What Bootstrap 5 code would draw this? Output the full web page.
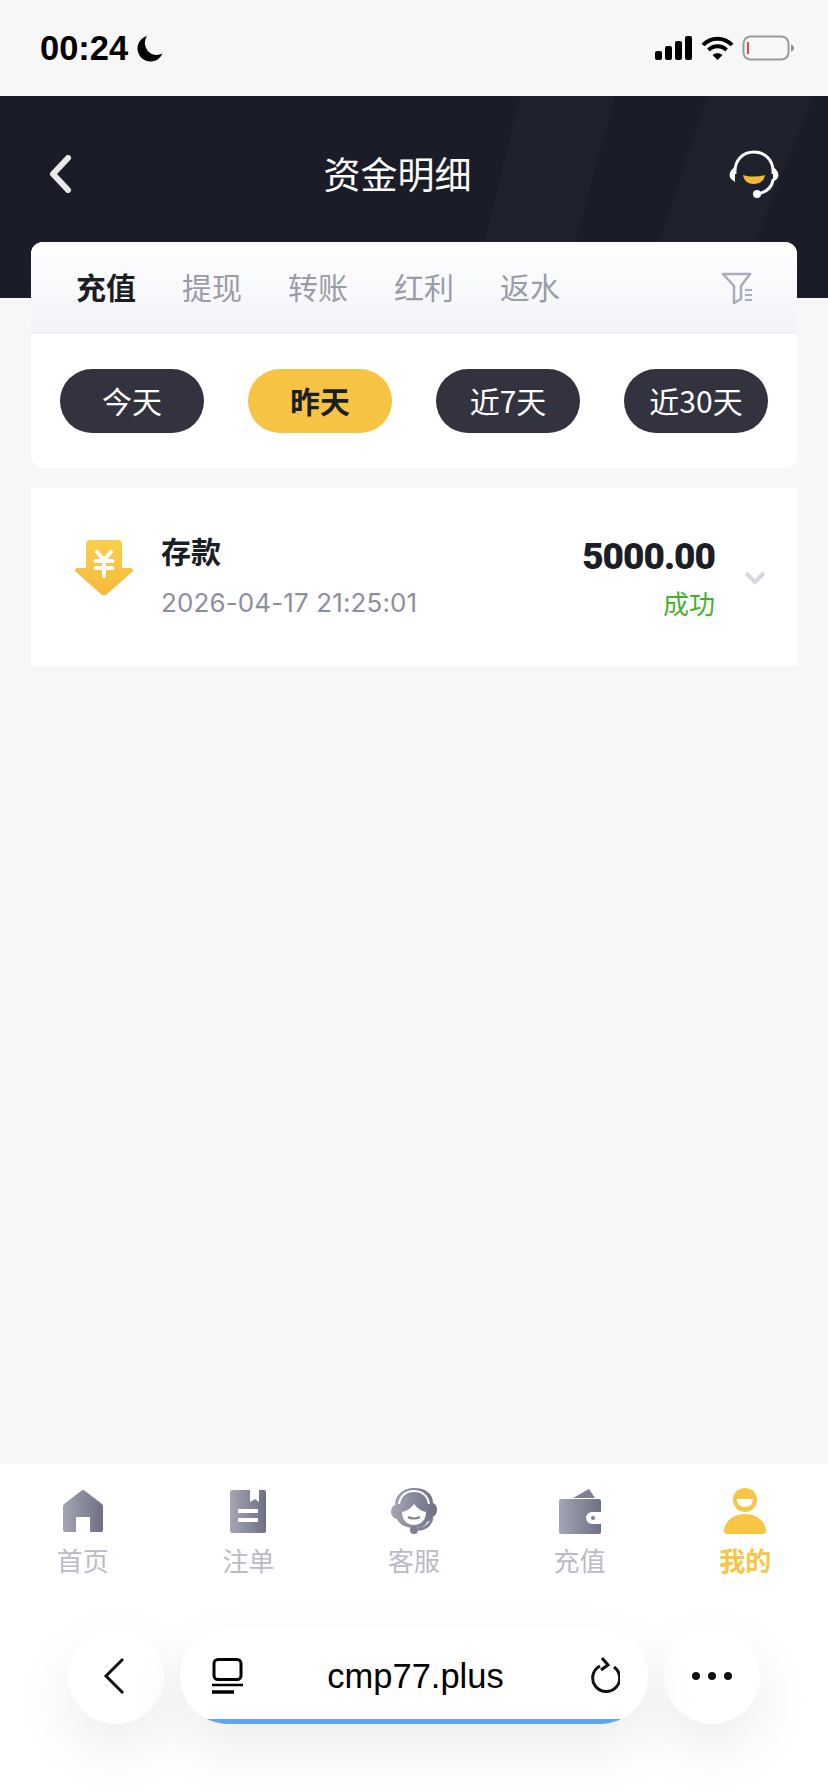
<!DOCTYPE html>
<html lang="zh-CN">
<head>
  <meta charset="UTF-8">
  <meta name="viewport" content="width=device-width, initial-scale=1.0">
  <title>资金明细</title>
  <link href="https://cdn.jsdelivr.net/npm/bootstrap@5.3.0/dist/css/bootstrap.min.css" rel="stylesheet">
  <style>
    body {
      background: #f7f7f7;
      font-family: "Noto Sans CJK SC", "Liberation Sans", sans-serif;
      width: 828px;
      height: 1792px;
      overflow: hidden;
    }
    .page-wrap { height: 1792px; }
    .status-row { height: 96px; padding: 0 34px 0 40px; }
    .status-time { font: 700 34.5px/1 "Liberation Sans", sans-serif; color: #000; margin-right: 9px; }
    .top-head { height: 202px; background: #1a1d27; overflow: hidden; }
    .head-bands { position: absolute; left: 0; top: 0; }
    .head-row { height: 156px; padding: 0 49px 0 48px; position: relative; }
    .head-title { font-size: 37px; font-weight: 400; color: #fff; line-height: 1; margin-right: 6px; padding-bottom: 2px; }
    .filter-card {
      margin: -56px 31px 0;
      background: #fff;
      border-radius: 12px;
      position: relative;
      overflow: hidden;
    }
    .type-tabs {
      height: 92px;
      padding: 0 44px 0 45px;
      gap: 46px;
      background: linear-gradient(180deg, #fff 0%, #f1f3f8 100%);
    }
    .type-tab { font-size: 30px; color: #9a9ca9; line-height: 1; padding-bottom: 4px; }
    .type-tab.is-on { color: #1c1e26; font-weight: 700; }
    .day-row { padding: 35px 29px 35px 29px; justify-content: space-between; }
    .day-pill {
      width: 144px;
      height: 64px;
      border-radius: 32px;
      background: #32333f;
      color: #fff;
      font-size: 30px;
      line-height: 1;
      padding-bottom: 2px;
    }
    .day-pill.is-on { background: #f7c343; color: #1c1e26; font-weight: 700; }
    .record-card {
      margin: 20px 31px 0;
      height: 178px;
      background: #fff;
      padding: 0 31px 0 44px;
    }
    .record-icon { width: 58px; margin-right: 28px; margin-top: -18px; }
    .record-name { font-size: 30px; font-weight: 700; color: #1c1e26; line-height: 1; margin-bottom: 25px; margin-top: -4px; }
    .record-date { font: 400 26px/1 Inter, sans-serif; color: #8d8f9c; letter-spacing: .12px; }
    .record-amount { font: 900 37px/1 Roboto, sans-serif; letter-spacing: -1px; color: #1c1e26; margin-bottom: 15px; }
    .record-state { font-size: 26px; color: #46b02e; line-height: 1; }
    .record-arrow { margin-left: 29px; margin-top: 2px; }
    .bottom-area { background: #fff; height: 328px; }
    .tab-item { width: 20%; padding-top: 24px; }
    .tab-icon { height: 46px; }
    .tab-text { font-size: 26px; line-height: 1; margin-top: 13px; color: #b9bbc7; }
    .tab-item.is-on .tab-text { color: #f7c644; font-weight: 700; }
    .browser-bar { margin-top: 55px; padding: 0 68px; gap: 16px; }
    .round-btn {
      width: 96px;
      height: 96px;
      border-radius: 48px;
      background: #fff;
      box-shadow: 0 24px 60px rgba(0, 0, 0, .08);
    }
    .back-mark { margin-right: 5px; }
    .url-box {
      width: 468px;
      height: 96px;
      border-radius: 48px;
      background: #fff;
      box-shadow: 0 24px 60px rgba(0, 0, 0, .08);
      padding: 0 28px 0 32px;
      position: relative;
      overflow: hidden;
    }
    .url-text { font: 400 34.5px/1 "Liberation Sans", sans-serif; color: #000; margin-left: -3px; }
    .load-line { position: absolute; left: 0; right: 0; bottom: 0; height: 5px; background: #5fa5f7; }
  </style>
</head>
<body>
  <div class="page-wrap d-flex flex-column">
    <!-- Status bar -->
    <div class="status-row d-flex align-items-center">
      <span class="status-time">00:24</span>
      <svg width="26" height="27" viewBox="0 0 26 27"><path d="M10 1a13 13 0 1 0 15.500 17.500A12 12 0 0 1 10 1z" fill="#000"/></svg>
      <div class="ms-auto d-flex align-items-center">
        <svg width="38" height="24" viewBox="0 0 38 24" fill="#000"><rect x="0" y="15" width="7" height="9" rx="2"/><rect x="10" y="10" width="7" height="14" rx="2"/><rect x="20" y="5" width="7" height="19" rx="2"/><rect x="30" y="0" width="7" height="24" rx="2"/></svg>
        <svg class="ms-2" width="33" height="25" viewBox="0 0 33 25" fill="none" stroke="#000" stroke-width="4"><path d="M2 9c8-8.500 21-8.500 29 0"/><path d="M7.500 14c5-5 13-5 18 0"/><path d="M16.500 24l-5-5c3-2.500 7-2.500 10 0z" fill="#000" stroke="none"/></svg>
        <svg class="ms-2" width="52" height="26" viewBox="0 0 52 26"><rect x="1.500" y="1.500" width="45" height="23" rx="7" fill="none" stroke="#9a9a9a" stroke-width="2"/><rect x="5" y="7" width="2" height="12" fill="#e8434a"/><path d="M49 9.500c2 .5 3 2 3 3.500s-1 3-3 3.500z" fill="#8f8f8f"/></svg>
      </div>
    </div>

    <!-- Dark header -->
    <div class="top-head position-relative">
      <svg class="head-bands" width="828" height="202" viewBox="0 0 828 202">
        <polygon points="520,0 615,0 560,202 471,202" fill="#1f222c"/>
        <polygon points="707,0 813,0 733,202 642,202" fill="#1f222c"/>
      </svg>
      <div class="head-row d-flex align-items-center justify-content-between">
        <svg width="24" height="38" viewBox="0 0 24 38" fill="none"><path d="M20 3L5 19l15 16" stroke="#e9e9e9" stroke-width="6" stroke-linecap="round" stroke-linejoin="round"/></svg>
        <span class="head-title">资金明细</span>
        <svg width="50" height="48" viewBox="0 0 50 48" fill="none"><path d="M6 24C5 10 14 2 25 2s20 8 19 22" stroke="#fff" stroke-width="3"/><path d="M6 17c-5 3-7 8-4 12l4 3zM44 17c5 3 7 8 4 12l-4 3z" fill="#fff"/><path d="M44 30c-1 8-7 12-15 14" stroke="#fff" stroke-width="3" stroke-linecap="round"/><circle cx="28" cy="44" r="4" fill="#fff"/><path d="M14 25c7 2 15 2 22 0-1 6-5 9-11 9s-10-3-11-9z" fill="#f4b933"/></svg>
      </div>
    </div>

    <!-- Filters -->
    <div class="filter-card">
      <div class="type-tabs d-flex align-items-center">
        <span class="type-tab is-on">充值</span>
        <span class="type-tab">提现</span>
        <span class="type-tab">转账</span>
        <span class="type-tab">红利</span>
        <span class="type-tab">返水</span>
        <svg class="ms-auto" width="32" height="32" viewBox="0 0 32 32" fill="none" stroke="#a9acbb" stroke-width="2.500"><path d="M2 2h27l-9 12v13l-7 4V14z" stroke-linejoin="round"/><path d="M24 18h7M24 23h7M24 28h7" stroke-width="2"/></svg>
      </div>
      <div class="day-row d-flex">
        <div class="day-pill d-flex align-items-center justify-content-center">今天</div>
        <div class="day-pill is-on d-flex align-items-center justify-content-center">昨天</div>
        <div class="day-pill d-flex align-items-center justify-content-center">近7天</div>
        <div class="day-pill d-flex align-items-center justify-content-center">近30天</div>
      </div>
    </div>

    <!-- Record -->
    <div class="record-card d-flex align-items-center">
      <svg class="record-icon" width="58" height="56" viewBox="0 0 58 56">
        <defs>
          <linearGradient id="arrowFill" x1="0" y1="0" x2="0" y2="1"><stop offset="0" stop-color="#f9cf4c"/><stop offset="1" stop-color="#f5b93a"/></linearGradient>
          <linearGradient id="tabFill" x1="0" y1="0" x2="1" y2="0"><stop offset="0" stop-color="#a4a6b4"/><stop offset="1" stop-color="#6d6f84"/></linearGradient>
        </defs>
        <path d="M11 4a4 4 0 0 1 4-4h28a4 4 0 0 1 4 4v24h8c3 0 4 2 2 4L32 54a4 4 0 0 1-6 0L1 32c-2-2-1-4 2-4h8z" fill="url(#arrowFill)"/>
        <path d="M22 12l7 8 7-8M20.500 21h17M20.500 28h17M29 20v16" fill="none" stroke="#fff" stroke-width="4" stroke-linecap="round" stroke-linejoin="round"/>
      </svg>
      <div>
        <div class="record-name">存款</div>
        <div class="record-date">2026-04-17 21:25:01</div>
      </div>
      <div class="ms-auto text-end">
        <div class="record-amount">5000.00</div>
        <div class="record-state">成功</div>
      </div>
      <svg class="record-arrow" width="22" height="14" viewBox="0 0 22 14" fill="none"><path d="M2 2l9 9 9-9" stroke="#d6d7e0" stroke-width="4"/></svg>
    </div>

    <!-- Bottom -->
    <div class="bottom-area mt-auto">
      <div class="d-flex">
        <div class="tab-item d-flex flex-column align-items-center">
          <svg class="tab-icon" width="42" height="46" viewBox="0 0 42 46"><path d="M1 18a3 3 0 0 1 1-2L19 3a3 3 0 0 1 4 0l17 13a3 3 0 0 1 1 2v24a2 2 0 0 1-2 2H28V29H14v15H3a2 2 0 0 1-2-2z" fill="url(#tabFill)"/></svg>
          <span class="tab-text">首页</span>
        </div>
        <div class="tab-item d-flex flex-column align-items-center">
          <svg class="tab-icon" width="36" height="46" viewBox="0 0 36 46"><path d="M2 2h18v12l5-3 4 3V2h5a2 2 0 0 1 2 2v39a2 2 0 0 1-2 2H2a2 2 0 0 1-2-2V4a2 2 0 0 1 2-2z" fill="url(#tabFill)"/><path d="M8 23h20M8 32h20" stroke="#fff" stroke-width="4"/></svg>
          <span class="tab-text">注单</span>
        </div>
        <div class="tab-item d-flex flex-column align-items-center">
          <svg class="tab-icon" width="46" height="46" viewBox="0 0 46 46"><path d="M23 0C11 0 4 8 4 17 1 18 0 21 0 24s2 6 6 7c3 6 9 9 17 9 5 0 9-1 12-4l1-2c3-1 5-3 6-5 2-1 4-4 4-7s-1-6-4-7c0-9-7-15-19-15z" fill="url(#tabFill)"/><path d="M8 16C9 8 15 3 23 3s14 5 15 13" fill="none" stroke="#fff" stroke-width="2"/><path d="M11 24c5-1 9-4 12-8 3 4 7 7 12 8 0 8-5 13-12 13s-12-5-12-13z" fill="#fff"/><path d="M17 29c4 2 8 2 12 0" fill="none" stroke="#7d7f92" stroke-width="2"/><path d="M41 30c-1 6-6 11-14 11" fill="none" stroke="#7d7f92" stroke-width="3"/><circle cx="23" cy="42" r="4" fill="#7d7f92"/></svg>
          <span class="tab-text">客服</span>
        </div>
        <div class="tab-item d-flex flex-column align-items-center">
          <svg class="tab-icon" width="42" height="46" viewBox="0 0 42 46"><path d="M14 10L30 1l6 9z" fill="#7e8094"/><path d="M2 11h38a2 2 0 0 1 2 2v11H33a6 6 0 0 0 0 12h9v8a2 2 0 0 1-2 2H2a2 2 0 0 1-2-2V13a2 2 0 0 1 2-2z" fill="url(#tabFill)"/><circle cx="34" cy="30" r="2" fill="#7e8094"/></svg>
          <span class="tab-text">充值</span>
        </div>
        <div class="tab-item is-on d-flex flex-column align-items-center">
          <svg class="tab-icon" width="42" height="46" viewBox="0 0 42 46" fill="#f7c644"><path d="M21 0c7 0 12 5 12 11.500S28 24 21 24 9 18 9 11.500 14 0 21 0z"/><path d="M13 11h16c0 5-3 8-8 8s-8-3-8-8z" fill="#fff"/><path d="M21 26c12 0 21 8 21 17 0 2-1 3-3 3H3c-2 0-3-1-3-3 0-9 9-17 21-17z"/></svg>
          <span class="tab-text">我的</span>
        </div>
      </div>

      <div class="browser-bar d-flex">
        <div class="round-btn d-flex align-items-center justify-content-center">
          <svg class="back-mark" width="22" height="38" viewBox="0 0 22 38" fill="none"><path d="M20 2L3 19l17 17" stroke="#111" stroke-width="3"/></svg>
        </div>
        <div class="url-box d-flex align-items-center justify-content-between">
          <svg width="32" height="36" viewBox="0 0 32 36" fill="none" stroke="#000"><rect x="2" y="1.500" width="27" height="20" rx="4" stroke-width="3"/><path d="M0 27h31" stroke-width="2.500"/><path d="M0 34h22" stroke-width="3.500"/></svg>
          <span class="url-text">cmp77.plus</span>
          <svg width="30" height="38" viewBox="0 0 30 38" fill="none" stroke="#111" stroke-width="3"><path d="M10 9a13.500 13.500 0 1 0 14 1"/><path d="M12 1l6 7-7 5"/></svg>
          <div class="load-line"></div>
        </div>
        <div class="round-btn d-flex align-items-center justify-content-center">
          <svg width="40" height="10" viewBox="0 0 40 10" fill="#111"><circle cx="4" cy="5" r="4"/><circle cx="20" cy="5" r="4"/><circle cx="36" cy="5" r="4"/></svg>
        </div>
      </div>
    </div>
  </div>
  <script src="https://cdn.jsdelivr.net/npm/bootstrap@5.3.0/dist/js/bootstrap.bundle.min.js"></script>
</body>
</html>
